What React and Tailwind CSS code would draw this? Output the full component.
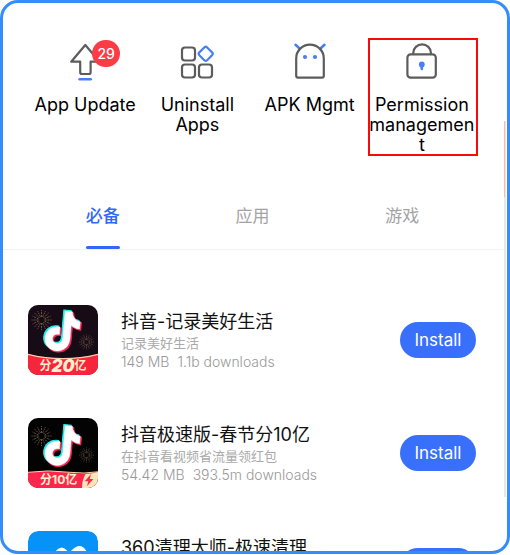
import React from "react";

function UpdateIcon() {
  return (
    <svg viewBox="0 0 40 40" className="h-10 w-10" fill="none" strokeLinejoin="round" strokeLinecap="round" strokeWidth="2.2" aria-hidden="true">
      <path d="M20.3 4 6.2 20.7h9V31.2q0 1.8 1.8 1.8h6.8q1.8 0 1.8-1.8V20.7h9Z" stroke="#5c5c5c" />
      <path d="M14.6 38.2h11.2" stroke="#4a7dfa" strokeWidth="2.4" />
    </svg>
  );
}

function AppsIcon() {
  return (
    <svg viewBox="0 0 40 40" className="h-10 w-10" fill="none" strokeLinejoin="round" strokeWidth="2.2" aria-hidden="true">
      <g stroke="#5c5c5c">
        <rect x="5" y="6.5" width="13" height="13" rx="3" />
        <rect x="5" y="23.5" width="13" height="13" rx="3" />
        <rect x="22" y="23.5" width="13" height="13" rx="3" />
      </g>
      <rect x="23.2" y="7.3" width="11" height="11" rx="2" transform="rotate(45 28.7 12.8)" stroke="#4a7dfa" />
    </svg>
  );
}

function ApkIcon() {
  return (
    <svg viewBox="0 0 40 40" className="h-10 w-10" fill="none" strokeLinecap="round" strokeLinejoin="round" strokeWidth="2.2" aria-hidden="true">
      <path d="M5.5 3.8 9.3 7.2M34.5 3.8 30.7 7.2" stroke="#4a7dfa" strokeWidth="2.6" />
      <path d="M6.2 34.8V17.4a13.8 13.8 0 0 1 27.6 0v17.4q0 1.8-1.8 1.8H8q-1.8 0-1.8-1.8Z" stroke="#5c5c5c" />
      <circle cx="15" cy="16" r="2.1" fill="#4a7dfa" />
      <circle cx="25" cy="16" r="2.1" fill="#4a7dfa" />
    </svg>
  );
}

function LockIcon() {
  return (
    <svg viewBox="0 0 40 40" className="h-10 w-10" fill="none" strokeLinecap="round" strokeWidth="2.2" aria-hidden="true">
      <path d="M11.3 13v-1.2a8.8 8.4 0 0 1 17.6 0v1.2" stroke="#5c5c5c" />
      <rect x="5.4" y="13.4" width="28.4" height="23.2" rx="3.2" stroke="#5c5c5c" />
      <circle cx="19.8" cy="23.4" r="2.9" fill="#4a7dfa" />
      <path d="M19.8 24.6v3.4" stroke="#4a7dfa" strokeWidth="2.6" />
    </svg>
  );
}

const burst = "M0-3V-10M0 3v7M3 0h7M-3 0h-7M2 2l5 5M-2-2l-5-5M2-2l5-5M-2 2l-5 5M1-3l3-6M-1-3l-3-6M1 3l3 6M-1 3l-3 6M3 1l6 3M3-1l6-3M-3 1l-6 3M-3-1l-6-3";
const note = "M34.5 8h7.4c.6 5.4 3.6 8.5 8.6 9.2v7.4c-3.3 0-6.2-1-8.7-2.8v13.3c0 8-5.8 13.3-12.6 13.3-7.2 0-12.4-5.5-12.4-12.1 0-7.3 6-12.8 14-12v7.5c-3.6-.7-6.5 1.3-6.5 4.4 0 2.8 2.1 4.7 4.8 4.7 3.1 0 5.4-2 5.4-5.9Z";

function DouyinLogo({ lite }) {
  return (
    <svg viewBox="0 0 70 70" className="h-full w-full" aria-hidden="true">
      <rect width="70" height="70" fill={lite ? "#030303" : "#170c15"} />
      <g fill="none" stroke="#a4836b" strokeWidth="0.6" strokeDasharray="2 0.9">
        <path d={burst} transform={lite ? "translate(13.5 18)" : "translate(13.5 15)"} />
        <path d={burst} transform="translate(58.5 37) scale(0.75)" />
      </g>
      <g transform={lite ? "translate(0.5 -0.5) rotate(5 34 28)" : "translate(0.5 -2) rotate(5 34 28)"}>
        <path d={note} fill="#20eef0" stroke="#20eef0" transform="translate(-1 -1)" />
        <path d={note} fill="#fb2454" stroke="#fb2454" transform="translate(1.6 1)" />
        <path d={note} fill="#fff" stroke="#fff" strokeWidth="0.4" transform="translate(0.4 0)" />
      </g>
      {lite ? (
        <>
          <path d="M0 54.5Q20 51.5 42 54.5 56 56.5 70 54V70H0Z" fill="#ff264e" />
          <path d="M0 54.3Q20 51.5 42 54.3 56 56 70 53.8" fill="none" stroke="#ffd2a5" />
          <path d="M57.5 56Q54 62 54 70h16V54Q63 56 57.5 56Z" fill="#ffe5b8" />
          <path d="m63 56-6.3 7.2h3.5L59 68.2l6.4-7.2h-3.6Z" fill="#f82b4c" />
        </>
      ) : (
        <>
          <path d="M0 49Q35 58 70 49V70H0Z" fill="#f8243c" />
          <path d="M0 49.3Q35 58 70 49.3" fill="none" stroke="#ffd0a8" strokeWidth="1.3" />
        </>
      )}
    </svg>
  );
}

function CleanerLogo() {
  return (
    <svg viewBox="0 0 70 70" className="h-full w-full" aria-hidden="true">
      <rect width="70" height="70" rx="10" fill="#0792f7" />
      <path d="M25 24q8-14 16-2l3-3q9-9 15 2v27H25Z" fill="#fff" />
    </svg>
  );
}

const shortcuts = [
  { label: "App Update", Icon: UpdateIcon, badge: "29" },
  { label: "Uninstall Apps", Icon: AppsIcon },
  { label: "APK Mgmt", Icon: ApkIcon },
  { label: "Permission management", Icon: LockIcon, marked: true },
];

const tabs = ["必备", "应用", "游戏"];

const apps = [
  {
    name: "抖音-记录美好生活", note: "记录美好生活", size: "149 MB", downloads: "1.1b downloads",
    logo: <DouyinLogo />,
    banner: <span className="absolute inset-x-0 bottom-0 flex items-center justify-center text-[12px] leading-[18px] font-bold text-[#ffefcd]">分<b className="text-[17px] italic">20</b>亿</span>,
  },
  {
    name: "抖音极速版-春节分10亿", note: "在抖音看视频省流量领红包", size: "54.42 MB", downloads: "393.5m downloads",
    logo: <DouyinLogo lite />,
    banner: <span className="absolute bottom-0 left-0 pl-3 text-[12px] leading-4 font-bold text-[#ffefcd]">分10亿</span>,
  },
  { name: "360清理大师-极速清理", logo: <CleanerLogo /> },
];

export default function App() {
  return (
    <div className="h-screen bg-white pb-px font-[Inter,'Noto_Sans_CJK_SC',sans-serif]">
      <main className="flex h-full overflow-hidden rounded-[18px] border-3 border-[#338dfb] bg-white pr-px">
        <div className="min-w-0 flex-1">
          <nav className="grid grid-cols-4 gap-1 pt-9 pr-7 pl-7">
            {shortcuts.map(({ label, Icon, badge, marked }) => (
              <button key={label} type="button" className="relative flex h-[116px] min-w-0 flex-col items-center text-[18px] leading-5 text-black">
                <span className="relative flex h-14 w-10 items-start justify-center pt-0.5">
                  <Icon />
                  {badge && (
                    <span className="absolute top-px left-[27px] flex h-[27px] w-7 items-center justify-center rounded-full bg-[#fb3b45] text-[14px] leading-none font-medium text-white">{badge}</span>
                  )}
                </span>
                <span className="w-full text-center break-words">{label}</span>
                {marked && <span className="absolute -top-px -right-0.5 -bottom-px left-0 border-2 border-[#fb0808]" />}
              </button>
            ))}
          </nav>

          <div role="tablist" className="mt-9 grid grid-cols-3 border-b border-[#f2f2f2] pr-[27px] pl-[25px]">
            {tabs.map((tab, i) => (
              <button key={tab} type="button" role="tab" aria-selected={i === 0} className={i === 0 ? "flex flex-col items-center pt-[13px] text-[17px] leading-6 font-medium text-[#3268f5]" : "flex flex-col items-center pt-[13px] text-[17px] leading-6 text-[#a3a3a3]"}>
                {tab}
                <span className={i === 0 ? "mt-[18px] h-[3px] w-[34px] rounded-full bg-[#3268f5]" : "mt-[18px] h-[3px]"} />
              </button>
            ))}
          </div>

          <ul className="flex flex-col gap-[43px] pt-[55px] pr-7 pl-[25px]">
            {apps.map((app) => (
              <li key={app.name} className="flex h-[70px] items-center">
                <span className="relative h-[70px] w-[70px] shrink-0 overflow-hidden rounded-[10px]">
                  {app.logo}
                  {app.banner}
                </span>
                <div className="ml-[23px] h-[60px] min-w-0 flex-1 whitespace-nowrap">
                  <h2 className="text-[18px] leading-6 text-[#111]">{app.name}</h2>
                  {app.note && <p className="text-[13px] leading-[18px] text-[#aaa]">{app.note}</p>}
                  {app.size && <p className="flex gap-2 text-[14px] leading-5 font-light text-[#999]"><span>{app.size}</span><span>{app.downloads}</span></p>}
                </div>
                <button type="button" className="h-9 w-[76px] shrink-0 rounded-full bg-[#3970fb] pt-0.5 text-[17px] text-white">Install</button>
              </li>
            ))}
          </ul>
        </div>
        <div className="flex w-0.5 shrink-0 flex-col pt-[118px]" aria-hidden="true">
          <span className="h-[76px] border-l border-[#ffb9aa] bg-[#e8e8e8]" />
          <span className="h-[300px] bg-[#e8e8e8]" />
        </div>
      </main>
    </div>
  );
}
